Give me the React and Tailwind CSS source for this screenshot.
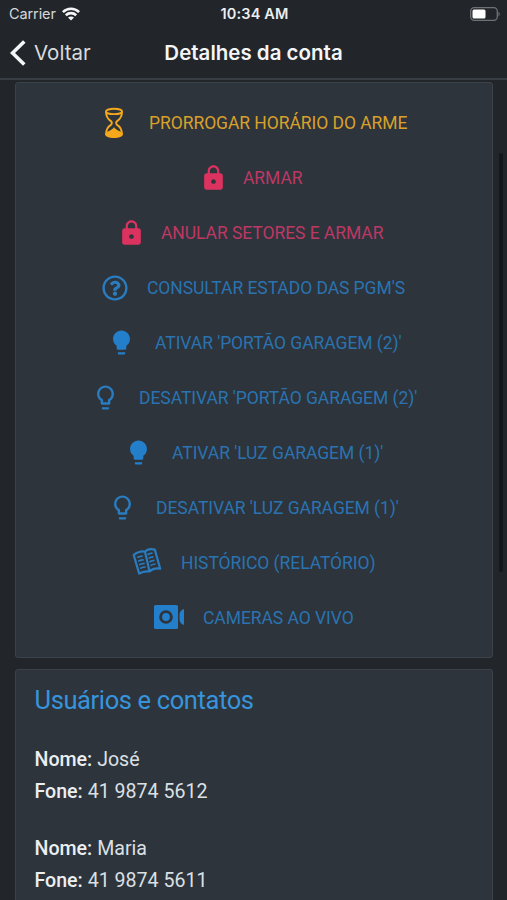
import React from 'react';
import { MdLock } from 'react-icons/md';
import { FaRegQuestionCircle } from 'react-icons/fa';

const Hourglass = ({ className }) => (
  <svg viewBox="0 0 20 32" className={className} fill="none" stroke="currentColor" strokeWidth="1.9">
    <ellipse cx="10" cy="4.4" rx="8" ry="2.7" />
    <path d="M2 4.6c0 5 1.7 7.4 4.6 9.3 1.7 1.2 1.7 3 0 4.2C3.7 20 2 22.4 2 27.5M18 4.6c0 5-1.7 7.4-4.6 9.3-1.7 1.2-1.7 3 0 4.2C16.3 20 18 22.4 18 27.5" />
    <path
      d="M1.2 27.5c0-1.6 1-2.3 2.6-3 2.4-1.1 4.5-2.2 6.2-4.3 1.7 2.1 3.8 3.2 6.2 4.3 1.6.7 2.6 1.4 2.6 3 0 2-3.9 3.5-8.8 3.5s-8.8-1.5-8.8-3.5z"
      fill="currentColor"
      stroke="none"
    />
  </svg>
);

const Bulb = ({ className }) => (
  <svg viewBox="0 0 24 24" className={className} fill="currentColor">
    <path d="M9 21c0 .55.45 1 1 1h4c.55 0 1-.45 1-1v-1H9v1zm3-19C8.14 2 5 5.14 5 9c0 2.38 1.19 4.47 3 5.74V17c0 .55.45 1 1 1h6c.55 0 1-.45 1-1v-2.26c1.81-1.27 3-3.36 3-5.74 0-3.86-3.14-7-7-7z" />
  </svg>
);

const BulbOutline = ({ className }) => (
  <svg viewBox="0 0 24 24" className={className} fill="currentColor">
    <path d="M9 21c0 .55.45 1 1 1h4c.55 0 1-.45 1-1v-1H9v1zm3-19C8.14 2 5 5.14 5 9c0 2.38 1.19 4.47 3 5.74V17c0 .55.45 1 1 1h6c.55 0 1-.45 1-1v-2.26c1.81-1.27 3-3.36 3-5.74 0-3.86-3.14-7-7-7zm2.85 11.1l-.85.6V16h-4v-2.3l-.85-.6C7.8 12.16 7 10.63 7 9c0-2.76 2.24-5 5-5s5 2.24 5 5c0 1.63-.8 3.16-2.15 4.1z" />
  </svg>
);

const Book = ({ className }) => (
  <svg viewBox="0 0 30 29" className={className} fill="none" stroke="currentColor" strokeWidth="2.2" strokeLinejoin="round">
    <path d="M13 4.7C9.5 3.8 4.5 5.2 1.7 8L7.2 26.6c2.7-2 6.3-2.6 10.3-2.2 3-2.7 6.5-3.5 10.7-2.7L22.8 2.6C18.5 1.6 15 2.4 13 4.7zl4.5 19.5" />
    <path
      d="M5.2 10.6c1.9-1 3.5-1.4 5.5-1.4M6.2 14.2c1.9-1 3.5-1.4 5.5-1.4M7.2 17.8c1.9-1 3.5-1.4 5.5-1.4M8.2 21.4c1.9-1 3.5-1.4 5.5-1.4M15.5 7.8c1.7-1.2 3.2-1.6 5-1.6M16.5 11.4c1.7-1.2 3.2-1.6 5-1.6M17.5 15c1.7-1.2 3.2-1.6 5-1.6M18.5 18.6c1.7-1.2 3.2-1.6 5-1.6"
      strokeWidth="1.7"
    />
  </svg>
);

const Camera = ({ className }) => (
  <svg viewBox="0 0 30 24" className={className} fill="currentColor">
    <path
      fillRule="evenodd"
      d="M1.5 0h21A1.5 1.5 0 0 1 24 1.5v21a1.5 1.5 0 0 1-1.5 1.5h-21A1.5 1.5 0 0 1 0 22.5v-21A1.5 1.5 0 0 1 1.5 0zM12 5.2a6.8 6.8 0 1 0 0 13.6 6.8 6.8 0 1 0 0-13.6z"
    />
    <circle cx="12" cy="12" r="3.9" />
    <path d="M30 4v16c-2.5-.8-4.5-3-4.5-5V9c0-2 2-4.2 4.5-5z" />
  </svg>
);

const actions = [
  { label: 'PRORROGAR HORÁRIO DO ARME', icon: Hourglass, size: 'w-5 h-8', row: 'pl-[88px] text-[#d9a02b]', tint: 'text-[#f5a81c]', text: 'ml-[25px]' },
  { label: 'ARMAR', icon: MdLock, size: 'w-[29px] h-7', row: 'pl-[183px] text-[#bd3864]', tint: 'text-[#dc3260]', text: 'ml-[15px]' },
  { label: 'ANULAR SETORES E ARMAR', icon: MdLock, size: 'w-[29px] h-7', row: 'pl-[101px] text-[#bd3864]', tint: 'text-[#dc3260]', text: 'ml-[15px]' },
  { label: "CONSULTAR ESTADO DAS PGM'S", icon: FaRegQuestionCircle, size: 'w-[26px] h-[26px]', row: 'pl-[86px] text-[#2a73b0]', tint: 'text-[#2a7cc0]', text: 'ml-[19px]' },
  { label: "ATIVAR 'PORTÃO GARAGEM (2)'", icon: Bulb, size: 'w-[29px] h-[29px]', row: 'pl-[91px] text-[#2a73b0]', tint: 'text-[#247fcb]', text: 'ml-[19px]' },
  { label: "DESATIVAR 'PORTÃO GARAGEM (2)'", icon: BulbOutline, size: 'w-[29px] h-[29px]', row: 'pl-[74.5px] text-[#2a73b0]', tint: 'text-[#2a7cc0]', text: 'ml-[19.5px]' },
  { label: "ATIVAR 'LUZ GARAGEM (1)'", icon: Bulb, size: 'w-[29px] h-[29px]', row: 'pl-[108px] text-[#2a73b0]', tint: 'text-[#247fcb]', text: 'ml-[19px]' },
  { label: "DESATIVAR 'LUZ GARAGEM (1)'", icon: BulbOutline, size: 'w-[29px] h-[29px]', row: 'pl-[92px] text-[#2a73b0]', tint: 'text-[#2a7cc0]', text: 'ml-[19px]' },
  { label: 'HISTÓRICO (RELATÓRIO)', icon: Book, size: 'w-[30px] h-[29px] mb-0.5', row: 'pl-[116px] text-[#2a73b0]', tint: 'text-[#2a7cc0]', text: 'ml-[19px]' },
  { label: 'CAMERAS AO VIVO', icon: Camera, size: 'w-[30px] h-6 mb-0.5', row: 'pl-[138px] text-[#2a73b0]', tint: 'text-[#247fcb]', text: 'ml-[19px]' },
];

const contacts = [
  { name: 'José', phone: '41 9874 5612' },
  { name: 'Maria', phone: '41 9874 5611' },
];

function StatusBar() {
  return (
    <div className="grid grid-cols-3 items-center h-7 pl-[9px] pr-[7px] text-[14.5px] text-[#d5d8db]">
      <div className="flex items-center gap-1.5">
        <span className="tracking-[-0.1px]">Carrier</span>
        <svg viewBox="0 0 18 14" className="w-[18px] h-3.5" fill="none" stroke="#f4f5f6" strokeWidth="2.6">
          <path d="M.9 5.1c4.6-4.4 11.6-4.4 16.2 0M3.8 8.2c3-2.8 7.4-2.8 10.4 0" />
          <path d="M9 13.5l-3-3c1.7-1.5 4.3-1.5 6 0z" fill="#f4f5f6" stroke="none" />
        </svg>
      </div>
      <span className="text-center font-semibold tracking-[0.15px] text-[#eceef0]">10:34 AM</span>
      <svg viewBox="0 0 30 14" className="w-[30px] h-3.5 justify-self-end">
        <rect x=".7" y=".7" width="26.6" height="12.6" rx="3.5" fill="none" stroke="#6e7276" strokeWidth="1.3" />
        <rect x="2.5" y="2.5" width="13" height="9" rx="1.5" fill="#ffffff" />
        <path d="M28.5 4.7c1.6.8 1.6 3.8 0 4.6z" fill="#6e7276" />
      </svg>
    </div>
  );
}

function Header() {
  return (
    <header className="h-20 bg-[#22262b] border-b-2 border-[#383d43] font-['Inter',sans-serif]">
      <StatusBar />
      <div className="grid grid-cols-[1fr_auto_1fr] items-center h-[50px] px-2.5">
        <button className="flex items-center gap-2 text-[20.5px] text-[#d9dcdf]">
          <svg viewBox="0 0 16 26" className="w-4 h-[26px]" fill="none" stroke="#f4f5f6" strokeWidth="3.6">
            <path d="M14.3 1.5L2.5 13l11.8 11.5" />
          </svg>
          Voltar
        </button>
        <h1 className="text-[20.5px] font-semibold text-[#f4f5f6]">Detalhes da conta</h1>
      </div>
    </header>
  );
}

function App() {
  return (
    <div className="relative w-full h-[900px] overflow-hidden bg-[#22262b] font-['Roboto',sans-serif]">
      <Header />
      <main className="flex flex-col gap-[11px] pt-0.5 pl-[15px] pr-3.5">
        <section className="h-[576px] py-3 border border-[#3b4148] rounded-[3px] bg-[#2d343c]">
          {actions.map(({ label, icon: Icon, size, row, tint, text }) => (
            <div key={label} className={`flex items-center h-[55px] whitespace-nowrap text-[17.5px] tracking-[-0.06px] ${row}`}>
              <Icon className={`shrink-0 ${size} ${tint}`} />
              <span className={`pt-0.5 ${text}`}>{label}</span>
            </div>
          ))}
        </section>
        <section className="h-[280px] pt-3.5 pl-[18.5px] border border-[#3b4148] rounded-[3px] bg-[#2d343c]">
          <h2 className="mb-7 text-[25.5px] leading-8 tracking-[-0.38px] text-[#3794dc]">Usuários e contatos</h2>
          {contacts.map(({ name, phone }) => (
            <div key={name} className="mb-[25px] text-[19.6px] leading-8 text-[#dce0e4]">
              <p><span className="font-medium text-[#eceff1]">Nome:</span> {name}</p>
              <p><span className="font-medium text-[#eceff1]">Fone:</span> {phone}</p>
            </div>
          ))}
        </section>
      </main>
      {/* Scroll indicator */}
      <div className="absolute right-1 top-[153px] w-1 h-[419px] rounded-full bg-[#14181b]" />
    </div>
  );
}

export default App;
